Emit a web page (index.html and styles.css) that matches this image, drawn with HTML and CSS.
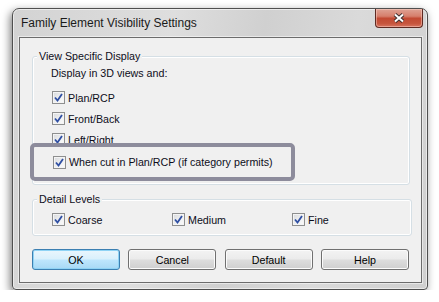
FILE: index.html
```html
<!DOCTYPE html>
<html lang="en">
    <head>
        <meta charset="UTF-8">
        <title>Family Element Visibility Settings</title>
        <link rel="stylesheet" href="styles.css">
    </head>
    <body>
        <div class="window">
            <div class="titlebar">
                <span class="title">Family Element Visibility Settings</span>
                <button class="close-button" title="Close">
                    <svg width="12" height="10" viewBox="0 0 12 10">
                        <path d="M2 1.5 L10 8.5 M10 1.5 L2 8.5" stroke="#3d3030" stroke-width="4"/>
                        <path d="M2 1.5 L10 8.5 M10 1.5 L2 8.5" stroke="#fff" stroke-width="2"/>
                    </svg>
                </button>
            </div>
            <div class="client">
                <fieldset class="group view-group">
                    <legend>View Specific Display</legend>
                    <div class="row">Display in 3D views and:</div>
                    <div class="check-list">
                        <label class="check"><span class="box"><svg viewBox="0 0 11 11"><path d="M2 5.5 L4.5 8.5 L9 2"/></svg></span>Plan/RCP</label>
                        <label class="check"><span class="box"><svg viewBox="0 0 11 11"><path d="M2 5.5 L4.5 8.5 L9 2"/></svg></span>Front/Back</label>
                        <label class="check"><span class="box"><svg viewBox="0 0 11 11"><path d="M2 5.5 L4.5 8.5 L9 2"/></svg></span>Left/Right</label>
                    </div>
                    <div class="callout">
                        <label class="check"><span class="box"><svg viewBox="0 0 11 11"><path d="M2 5.5 L4.5 8.5 L9 2"/></svg></span>When cut in Plan/RCP (if category permits)</label>
                    </div>
                </fieldset>
                <fieldset class="group detail-group">
                    <legend>Detail Levels</legend>
                    <div class="levels">
                        <label class="check"><span class="box"><svg viewBox="0 0 11 11"><path d="M2 5.5 L4.5 8.5 L9 2"/></svg></span>Coarse</label>
                        <label class="check"><span class="box"><svg viewBox="0 0 11 11"><path d="M2 5.5 L4.5 8.5 L9 2"/></svg></span>Medium</label>
                        <label class="check"><span class="box"><svg viewBox="0 0 11 11"><path d="M2 5.5 L4.5 8.5 L9 2"/></svg></span>Fine</label>
                    </div>
                </fieldset>
                <div class="buttons">
                    <button class="btn btn-default">OK</button>
                    <button class="btn">Cancel</button>
                    <button class="btn">Default</button>
                    <button class="btn">Help</button>
                </div>
            </div>
        </div>
    </body>
</html>
```

FILE: styles.css
```css
body {
    margin:           0;
    padding:          8px 0 0 12px;
    background-color: #ffffff;
    font-family:      "Liberation Sans", Arial, sans-serif;
    color:            #000000;
}

.window {
    box-sizing:    border-box;
    width:         416px;
    height:        282px;
    padding:       0 5px 6px 6px;
    border:        1px solid #4f4f4f;
    border-radius: 7px 7px 4px 4px;
    background:    linear-gradient(100deg, #d3d3d3 0%, #dedede 35%, #d0d0d0 55%, #dadada 75%, #cfcfcf 100%);
    box-shadow:    -2px 3px 9px rgba(0, 0, 0, 0.5), inset 0 0 0 1px rgba(255, 255, 255, 0.55);
}

.titlebar {
    display:     flex;
    align-items: flex-start;
    height:      28px;
}

.title {
    padding-left: 2px;
    line-height:  28px;
    font-size:    12px;
    color:        #1a1a1a;
}

.close-button {
    display:         flex;
    align-items:     center;
    justify-content: center;
    margin-left:     auto;
    margin-right:    -1px;
    width:           48px;
    height:          19px;
    padding:         0;
    border:          1px solid #5e2a22;
    border-top:      0;
    border-radius:   0 0 4px 4px;
    background:      linear-gradient(#dea294 0%, #d67f6c 40%, #c24a33 52%, #c6553d 80%, #d77561 100%);
    box-shadow:      inset 0 0 0 1px rgba(255, 220, 210, 0.45);
}

.client {
    box-sizing:       border-box;
    height:           246px;
    border:           1px solid #6c6c6c;
    background-color: #f0f0f0;
    box-shadow:       0 0 0 1px rgba(255, 255, 255, 0.5);
    font-size:        10.7px;
    color:            #0d0d1a;
}

.group {
    margin:        0 11px 0 12px;
    padding:       0 0 0 18px;
    border:        1px solid #d5dfe5;
    border-radius: 3px;
    box-shadow:    inset 0 0 0 1px #ffffff;
}

.group legend {
    margin-left:      -14px;
    padding:          0 2px;
    line-height:      14px;
    background-color: #f0f0f0;
}

.view-group {
    margin-top:     11px;
    padding-bottom: 3px;
}

.detail-group {
    margin-top:     7px;
    padding-top:    3px;
    padding-bottom: 5px;
}

.row {
    height:      21px;
    line-height: 21px;
}

.check-list {
    margin-top: 3px;
}

.check {
    display:     flex;
    align-items: center;
    height:      21px;
}

.box {
    box-sizing:    border-box;
    width:         13px;
    height:        13px;
    margin:        0 3px 0 1px;
    border:        1px solid #8e8f8f;
    background:    linear-gradient(135deg, #d7d9dc 0%, #f1f2f3 60%, #fbfbfb 100%);
    box-shadow:    inset 0 0 0 1px #f4f4f4;
}

.box svg {
    display:      block;
    width:        11px;
    height:       11px;
    fill:         none;
    stroke:       #2f4fa3;
    stroke-width: 1.8;
}

.callout {
    position:         relative;
    box-sizing:       border-box;
    width:            265px;
    height:           38px;
    margin:           -7px 0 0 -21px;
    padding:          0 0 0 18px;
    border:           4px solid #8d8c9c;
    border-radius:    5px;
    background-color: #f0f0f0;
}

.callout .check {
    height: 30px;
}

.levels {
    display:               grid;
    grid-template-columns: 120px 120px 120px;
}

.buttons {
    display:         flex;
    justify-content: space-between;
    margin:          13px 12px 0 12px;
}

.btn {
    width:         88px;
    height:        21px;
    padding:       0;
    border:        1px solid #707070;
    border-radius: 3px;
    background:    linear-gradient(#f3f3f3 0%, #ebebeb 48%, #dddddd 52%, #cfcfcf 100%);
    box-shadow:    inset 0 0 0 1px #fbfbfb;
    font:          inherit;
    color:         #000000;
}

.btn-default {
    border-color: #3c7fb1;
    background:   linear-gradient(#eaf6fd 0%, #d9f0fc 48%, #bee6fd 52%, #a7d9f5 100%);
    box-shadow:   inset 0 0 0 1px #8fd3f5;
}
```
